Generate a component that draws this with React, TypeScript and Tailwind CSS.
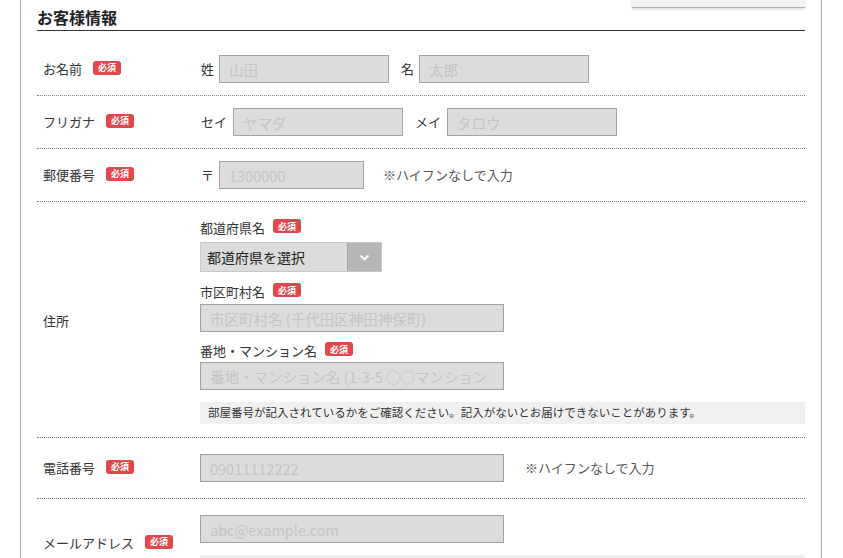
import React from "react";

const FONT = { fontFamily: '"Noto Sans CJK JP", "Noto Sans", sans-serif' };

function Badge({ className = "" }: { className?: string }) {
  return (
    <span
      className={`inline-flex h-[14px] w-[28px] items-center justify-center rounded-[3px] bg-[#e2474b] text-[9px] font-bold leading-none text-white ${className}`}
    >
      必須
    </span>
  );
}

function TextInput({ placeholder, w }: { placeholder: string; w: string }) {
  return (
    <input
      readOnly
      placeholder={placeholder}
      className={`${w} h-[28px] border border-[#a3a3a3] bg-[#dcdcdc] px-[9px] text-[14.5px] text-[#333] outline-none placeholder:text-[#c4c4c4]`}
      style={FONT}
    />
  );
}

function Label({ text, className = "" }: { text: string; className?: string }) {
  return (
    <div className={`flex w-[163px] shrink-0 items-center pl-[6px] ${className}`}>
      <span className="text-[13px] leading-[20px] text-[#333]">{text}</span>
      <Badge className="mb-[3px] ml-[11px]" />
    </div>
  );
}

const ROW = "flex border-b border-dotted border-[#7a7a7a]";

export default function App() {
  return (
    <div className="min-h-[558px] bg-white" style={FONT}>
      <div className="relative ml-[20px] min-h-[558px] w-[802px] border-x border-[#aaaaaa] px-[16px]">
        <div className="absolute right-[16px] top-0 h-[8px] w-[173px] border-b border-[#b0b0b0] bg-[#f2f2f2] shadow-[0_1px_3px_rgba(0,0,0,0.18)]" />

        <h2 className="border-b border-[#333] pb-[2px] pt-[6px] text-[16px] font-bold leading-[22px] text-[#222]">
          お客様情報
        </h2>

        {/* お名前 */}
        <div className={`${ROW} items-center pb-[12px] pt-[24px]`}>
          <Label text="お名前" />
          <div className="flex items-center text-[13px] text-[#333]">
            <span className="mr-[5px] pl-[1px]">姓</span>
            <TextInput placeholder="山田" w="w-[170px]" />
            <span className="ml-[12px] mr-[5px]">名</span>
            <TextInput placeholder="太郎" w="w-[170px]" />
          </div>
        </div>

        {/* フリガナ */}
        <div className={`${ROW} items-center py-[12px]`}>
          <Label text="フリガナ" />
          <div className="flex items-center text-[13px] text-[#333]">
            <span className="mr-[6px] pl-[1px]">セイ</span>
            <TextInput placeholder="ヤマダ" w="w-[170px]" />
            <span className="ml-[12px] mr-[6px]">メイ</span>
            <TextInput placeholder="タロウ" w="w-[170px]" />
          </div>
        </div>

        {/* 郵便番号 */}
        <div className={`${ROW} items-center py-[12px]`}>
          <Label text="郵便番号" />
          <div className="flex items-center text-[13px] text-[#333]">
            <span className="mr-[5px] pl-[1px]">〒</span>
            <TextInput placeholder="1300000" w="w-[145px]" />
            <span className="ml-[19px] text-[#555]">※ハイフンなしで入力</span>
          </div>
        </div>

        {/* 住所 */}
        <div className={`${ROW} items-center pb-[13px] pt-[16px]`}>
          <div className="flex w-[163px] shrink-0 items-center pl-[6px]">
            <span className="text-[13px] leading-[20px] text-[#333]">住所</span>
          </div>
          <div className="flex flex-1 flex-col text-[13px] text-[#333]">
            <div className="flex h-[20px] items-center">
              <span>都道府県名</span>
              <Badge className="mb-[4px] ml-[8px]" />
            </div>
            <div className="mt-[4px] flex h-[30px] w-[182px] border border-[#c8c8c8] bg-[#dcdcdc]">
              <div className="flex flex-1 items-center pl-[6px] text-[14px] text-[#222]">
                都道府県を選択
              </div>
              <div className="flex w-[34px] items-center justify-center border-l border-[#a9a9a9] bg-[#b6b6b6]">
                <svg width="11" height="7" viewBox="0 0 11 7" fill="none">
                  <polyline points="1.5,1.5 5.5,5.5 9.5,1.5" stroke="white" strokeWidth="1.8" />
                </svg>
              </div>
            </div>
            <div className="mt-[10px] flex h-[20px] items-center">
              <span>市区町村名</span>
              <Badge className="mb-[4px] ml-[8px]" />
            </div>
            <div className="mt-[2px]">
              <TextInput placeholder="市区町村名 (千代田区神田神保町)" w="w-[304px]" />
            </div>
            <div className="mt-[9px] flex h-[20px] items-center">
              <span>番地・マンション名</span>
              <Badge className="mb-[4px] ml-[8px]" />
            </div>
            <div className="mt-[1px]">
              <TextInput placeholder="番地・マンション名 (1-3-5 ○○マンション" w="w-[304px]" />
            </div>
            <div className="mt-[12px] flex h-[22px] items-center bg-[#f0f0f0] pl-[8px] text-[11.5px] text-[#333]">
              部屋番号が記入されているかをご確認ください。記入がないとお届けできないことがあります。
            </div>
          </div>
        </div>

        {/* 電話番号 */}
        <div className={`${ROW} items-center py-[16px]`}>
          <Label text="電話番号" />
          <div className="flex items-center text-[13px] text-[#333]">
            <TextInput placeholder="09011112222" w="w-[304px]" />
            <span className="ml-[21px] text-[#555]">※ハイフンなしで入力</span>
          </div>
        </div>

        {/* メールアドレス */}
        <div className={`${ROW} items-start pb-[12px] pt-[16px]`}>
          <Label text="メールアドレス" className="mt-[18px]" />
          <div className="flex flex-1 flex-col text-[13px] text-[#333]">
            <TextInput placeholder="abc@example.com" w="w-[304px]" />
            <div className="mt-[12px] h-[22px] bg-[#f0f0f0]" />
          </div>
        </div>
      </div>
    </div>
  );
}
